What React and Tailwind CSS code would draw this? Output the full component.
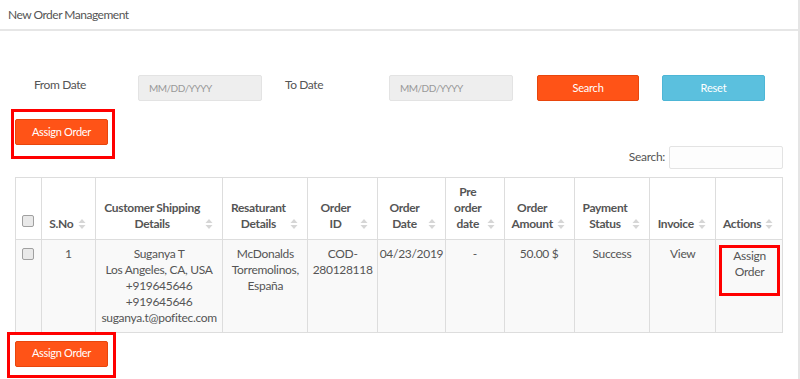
import React from "react";

const SortIcon = () => (
  <svg width="8" height="12" viewBox="0 0 8 12" className="absolute right-[9px] bottom-[9px]">
    <path d="M4 1 L7.5 5 L0.5 5 Z" fill="#d6d6d6" />
    <path d="M4 11 L7.5 7 L0.5 7 Z" fill="#d6d6d6" />
  </svg>
);

const Checkbox = () => (
  <span className="inline-block w-[12px] h-[12px] rounded-[2px] border border-[#a0a0a0] bg-[#e9e9e9]"></span>
);

const AssignButton = ({ boxClass }) => (
  <div className="relative w-[93px]">
    <button className="w-[93px] h-[26px] bg-[#ff5317] border border-[#e8450c] rounded-[2px] text-white text-[11px] tracking-[-0.3px]">
      Assign Order
    </button>
    <div className={"absolute border-[3px] border-[#ff0000] pointer-events-none " + boxClass}></div>
  </div>
);

const columns = [
  { label: ["", ""], w: "w-[25px]", check: true },
  { label: ["S.No"], w: "w-[54px]" },
  { label: ["Customer Shipping", "Details"], w: "w-[128px]" },
  { label: ["Resaturant", "Details"], w: "w-[85px]" },
  { label: ["Order", "ID"], w: "w-[70px]" },
  { label: ["Order", "Date"], w: "w-[68px]" },
  { label: ["Pre", "order", "date"], w: "w-[59px]" },
  { label: ["Order", "Amount"], w: "w-[70px]" },
  { label: ["Payment", "Status"], w: "w-[76px]" },
  { label: ["Invoice"], w: "w-[66px]" },
  { label: ["Actions"], w: "w-[67px]" },
];

const App = () => {
  return (
    <div
      className="w-[800px] h-[379px] overflow-hidden bg-white text-[#555] border-r-2 border-[#e5e5e5]"
      style={{ fontFamily: "Lato, 'Liberation Sans', sans-serif" }}
    >
      <div className="h-[31px] border-b-2 border-[#e6e6e6] pl-[8px] pt-[6px] text-[12px] tracking-[-0.5px] text-[#555]">
        New Order Management
      </div>

      <div className="px-[15px]">
        {/* filters */}
        <div className="flex items-start mt-[44px] h-[26px] text-[12px] tracking-[-0.4px]">
          <div className="w-[123px] pl-[19px] pt-[1px]">From Date</div>
          <div className="w-[124px] h-[26px] bg-[#eeeeee] border border-[#e3e3e3] rounded-[2px] pl-[10px] flex items-center text-[10px] tracking-[-0.5px] text-[#999]">
            MM/DD/YYYY
          </div>
          <div className="w-[127px] pl-[23px] pt-[1px]">To Date</div>
          <div className="w-[124px] h-[26px] bg-[#eeeeee] border border-[#e3e3e3] rounded-[2px] pl-[10px] flex items-center text-[10px] tracking-[-0.5px] text-[#999]">
            MM/DD/YYYY
          </div>
          <button className="ml-[24px] w-[102px] h-[26px] bg-[#ff5317] border border-[#e8450c] rounded-[2px] text-white text-[11px] tracking-[-0.2px]">
            Search
          </button>
          <button className="ml-[23px] w-[103px] h-[26px] bg-[#5bc0de] border border-[#4db6d6] rounded-[2px] text-white text-[11px] tracking-[-0.2px]">
            Reset
          </button>
        </div>

        <div className="mt-[17px]">
          <AssignButton boxClass="left-[-4px] right-[-7px] top-[-9px] bottom-[-14px]" />
        </div>

        <div className="flex justify-end items-center mt-[1px] h-[23px]">
          <span className="text-[12px] tracking-[-0.3px] mr-[4px] mb-[1px]">Search:</span>
          <div className="w-[114px] h-[23px] border border-[#e3e3e3] rounded-[2px] bg-[#fdfdfd]"></div>
        </div>

        {/* table */}
        <div className="mt-[8px] w-[768px] border border-[#dddddd] text-[12px] tracking-[-0.3px]">
          <div className="flex h-[62px] bg-white border-b border-[#dddddd]">
            {columns.map((c, i) => (
              <div
                key={i}
                className={
                  c.w +
                  " relative flex flex-col justify-end items-center font-bold leading-[16px] pb-[7px] " +
                  (i > 0 ? "border-l border-[#dddddd] pr-[14px] " : "")
                }
              >
                {c.check ? (
                  <div className="pb-[1px]">
                    <Checkbox />
                  </div>
                ) : (
                  <>
                    {c.label.map((l, j) => (
                      <span key={j} className="text-center whitespace-nowrap">
                        {l}
                      </span>
                    ))}
                    <SortIcon />
                  </>
                )}
              </div>
            ))}
          </div>
          <div className="flex h-[92px] bg-[#f9f9f9] leading-[16px] text-center">
            <div className="w-[25px] pt-[8px] flex justify-center">
              <div>
                <Checkbox />
              </div>
            </div>
            <div className="w-[54px] border-l border-[#dddddd] pt-[6px]">1</div>
            <div className="w-[128px] border-l border-[#dddddd] pt-[6px] flex flex-col">
              <span>Suganya T</span>
              <span>Los Angeles, CA, USA</span>
              <span>+919645646</span>
              <span>+919645646</span>
              <span>suganya.t@pofitec.com</span>
            </div>
            <div className="w-[85px] border-l border-[#dddddd] pt-[6px] flex flex-col">
              <span>McDonalds</span>
              <span>Torremolinos,</span>
              <span>España</span>
            </div>
            <div className="w-[70px] border-l border-[#dddddd] pt-[6px] flex flex-col">
              <span>COD-</span>
              <span>280128118</span>
            </div>
            <div className="w-[68px] border-l border-[#dddddd] pt-[6px]">04/23/2019</div>
            <div className="w-[59px] border-l border-[#dddddd] pt-[6px]">-</div>
            <div className="w-[70px] border-l border-[#dddddd] pt-[6px]">50.00 $</div>
            <div className="w-[76px] border-l border-[#dddddd] pt-[6px]">Success</div>
            <div className="w-[66px] border-l border-[#dddddd] pt-[6px]">View</div>
            <div className="w-[67px] border-l border-[#dddddd] pt-[5px] pl-[3px] pr-[2px]">
              <div className="h-[51px] border-[3px] border-[#ff0000] flex flex-col">
                <span>Assign</span>
                <span>Order</span>
              </div>
            </div>
          </div>
        </div>

        <div className="mt-[6px]">
          <AssignButton boxClass="left-[-8px] right-[-8px] top-[-7px] bottom-[-11px]" />
        </div>
      </div>
    </div>
  );
};

export default App;
